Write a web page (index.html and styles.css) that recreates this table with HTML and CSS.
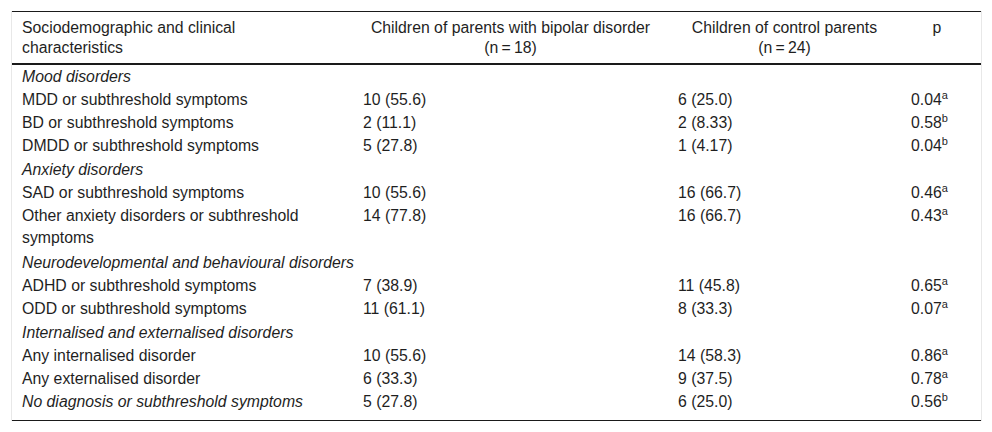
FILE: index.html
```html
<!DOCTYPE html>
<html lang="en">
<head>
<meta charset="utf-8">
<title>Table</title>
<link rel="stylesheet" href="styles.css">
</head>
<body>
<div class="wrap">
<table class="data">
  <colgroup>
    <col class="c1"><col class="c2"><col class="c3"><col class="c4">
  </colgroup>
  <thead>
    <tr>
      <th class="left">Sociodemographic and clinical characteristics</th>
      <th>Children of parents with bipolar disorder<br>(n&#8201;=&#8201;18)</th>
      <th>Children of control parents<br>(n&#8201;=&#8201;24)</th>
      <th class="pcol">p</th>
    </tr>
  </thead>
  <tbody>
    <tr class="cat first"><td colspan="4"><em>Mood disorders</em></td></tr>
    <tr><td>MDD or subthreshold symptoms</td><td>10 (55.6)</td><td>6 (25.0)</td><td class="pcol">0.04<sup>a</sup></td></tr>
    <tr><td>BD or subthreshold symptoms</td><td>2 (11.1)</td><td>2 (8.33)</td><td class="pcol">0.58<sup>b</sup></td></tr>
    <tr><td>DMDD or subthreshold symptoms</td><td>5 (27.8)</td><td>1 (4.17)</td><td class="pcol">0.04<sup>b</sup></td></tr>
    <tr class="cat"><td colspan="4"><em>Anxiety disorders</em></td></tr>
    <tr><td>SAD or subthreshold symptoms</td><td>10 (55.6)</td><td>16 (66.7)</td><td class="pcol">0.46<sup>a</sup></td></tr>
    <tr><td>Other anxiety disorders or subthreshold symptoms</td><td>14 (77.8)</td><td>16 (66.7)</td><td class="pcol">0.43<sup>a</sup></td></tr>
    <tr class="cat cat3"><td colspan="4"><em>Neurodevelopmental and behavioural disorders</em></td></tr>
    <tr><td>ADHD or subthreshold symptoms</td><td>7 (38.9)</td><td>11 (45.8)</td><td class="pcol">0.65<sup>a</sup></td></tr>
    <tr><td>ODD or subthreshold symptoms</td><td>11 (61.1)</td><td>8 (33.3)</td><td class="pcol">0.07<sup>a</sup></td></tr>
    <tr class="cat"><td colspan="4"><em>Internalised and externalised disorders</em></td></tr>
    <tr><td>Any internalised disorder</td><td>10 (55.6)</td><td>14 (58.3)</td><td class="pcol">0.86<sup>a</sup></td></tr>
    <tr><td>Any externalised disorder</td><td>6 (33.3)</td><td>9 (37.5)</td><td class="pcol">0.78<sup>a</sup></td></tr>
    <tr class="last"><td><em>No diagnosis or subthreshold symptoms</em></td><td>5 (27.8)</td><td>6 (25.0)</td><td class="pcol">0.56<sup>b</sup></td></tr>
  </tbody>
</table>
</div>
</body>
</html>
```
FILE: styles.css
```css
html, body {
  margin: 0;
  padding: 0;
  background: #ffffff;
}

body {
  font-family: "Liberation Sans", Arial, sans-serif;
  font-size: 15.8px;
  color: #1f1f1f;
}

.wrap {
  margin: 11px 0 0 11px;
  width: 971px;
  box-sizing: border-box;
  border-left: 1px solid #e8e8e8;
  border-right: 1px solid #e8e8e8;
}

.data {
  width: 100%;
  border-collapse: collapse;
  table-layout: fixed;
  border-top: 1px solid #1a1a1a;
  border-bottom: 1px solid #1a1a1a;
}

.c1 { width: 341px; }
.c2 { width: 315px; }
.c3 { width: 233px; }
.c4 { width: 80px; }

.data th {
  font-weight: normal;
  text-align: center;
  vertical-align: top;
  line-height: 20px;
  padding: 6px 10px 5px 10px;
  border-bottom: 2px solid #1a1a1a;
}

.data th.left {
  text-align: left;
  padding-right: 60px;
}

.data td {
  text-align: left;
  vertical-align: top;
  line-height: 22px;
  padding: 1px 10px 0 10px;
}

.data .pcol {
  padding-right: 18px;
}

.data tr.cat td {
  padding-top: 2px;
}

.data tr.cat.first td {
  padding-top: 1px;
}

.data tr.cat3 td {
  padding-top: 3px;
}

.data tr.last td {
  padding-bottom: 7px;
}

.data em {
  font-style: italic;
}

.data sup {
  font-size: 11px;
  line-height: 0;
  vertical-align: 6px;
}
```
